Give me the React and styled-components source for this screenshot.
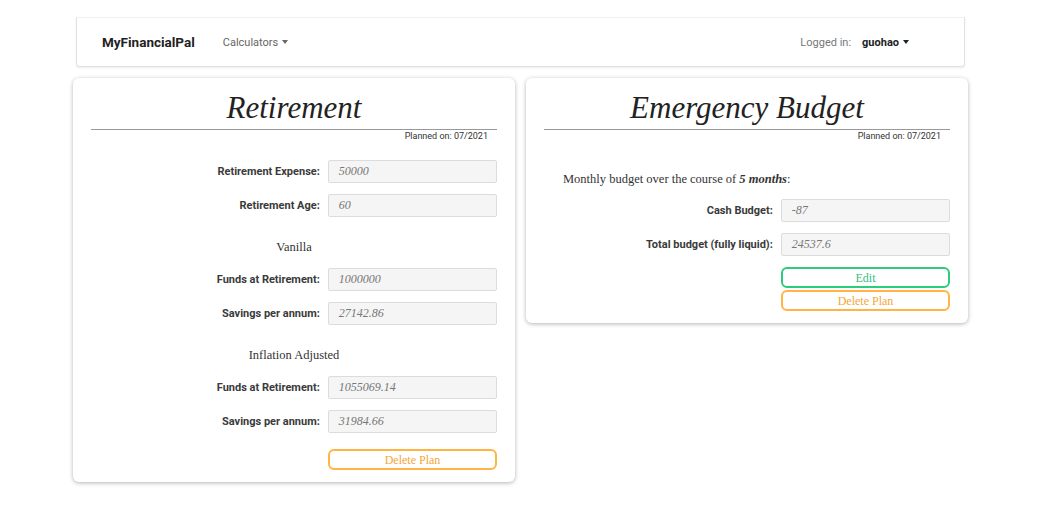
import React from 'react';
import styled, { createGlobalStyle } from 'styled-components';

const GlobalStyle = createGlobalStyle`
  body {
    margin: 0;
    background: #ffffff;
    font-family: Roboto, 'Liberation Sans', sans-serif;
  }
`;

const Page = styled.div`
  width: 1041px;
  height: 520px;
  padding-top: 17px;
  box-sizing: border-box;
`;

const NavBar = styled.nav`
  width: 889px;
  height: 50px;
  margin: 0 auto;
  box-sizing: border-box;
  border: 1px solid #e2e2e2;
  border-top-color: #f0f0f0;
  border-radius: 0 0 3px 3px;
  box-shadow: 0 1px 2px rgba(0, 0, 0, 0.08);
  display: flex;
  align-items: center;
  padding: 0 55px 0 25px;
`;

const Brand = styled.span`
  font-size: 13.5px;
  font-weight: 700;
  color: #222;
  margin-right: 28px;
`;

const NavLink = styled.span`
  font-size: 11px;
  color: ${(p) => (p.$strong ? '#222' : '#666')};
  font-weight: ${(p) => (p.$strong ? 700 : 400)};
  display: flex;
  align-items: center;
`;

const Caret = styled.span`
  display: inline-block;
  margin-left: 4px;
  border-top: 4px solid currentColor;
  border-left: 3.5px solid transparent;
  border-right: 3.5px solid transparent;
`;

const Spacer = styled.div`
  flex: 1;
`;

const LoggedLabel = styled.span`
  font-size: 11px;
  color: #777;
  margin-right: 11px;
`;

const Cards = styled.div`
  width: 895px;
  margin: 11px auto 0;
  display: flex;
  gap: 11px;
  align-items: flex-start;
`;

const Card = styled.section`
  width: 442px;
  box-sizing: border-box;
  padding: 0 18px 12px;
  border-radius: 6px;
  background: #fff;
  box-shadow: 0 1px 4px rgba(0, 0, 0, 0.3);
`;

const Title = styled.h2`
  margin: 0;
  padding-top: 8px;
  font-family: 'Liberation Serif', serif;
  font-style: italic;
  font-weight: 400;
  font-size: 31px;
  line-height: 43px;
  color: #222;
  text-align: center;
  border-bottom: 1px solid #999;
`;

const Planned = styled.div`
  font-size: 9px;
  line-height: 12px;
  color: #333;
  text-align: right;
  padding-right: 9px;
  margin-bottom: ${(p) => p.$after}px;
`;

const Row = styled.div`
  display: grid;
  grid-template-columns: 7fr 5fr;
  align-items: center;
  margin-bottom: ${(p) => p.$after ?? 11}px;
`;

const Label = styled.label`
  text-align: right;
  padding-right: 8px;
  font-size: 11px;
  font-weight: 700;
  color: #3a3a3a;
`;

const Field = styled.div`
  height: 23px;
  box-sizing: border-box;
  border: 1px solid #dcdcdc;
  border-radius: 2px;
  background: #f5f5f5;
  padding-left: 10px;
  font-family: 'Liberation Serif', serif;
  font-style: italic;
  font-size: 12px;
  line-height: 21px;
  color: #777;
`;

const Section = styled.div`
  font-family: 'Liberation Serif', serif;
  font-size: 12.5px;
  line-height: 20px;
  color: #333;
  text-align: center;
  margin: 20px 0 11px;
`;

const Note = styled.p`
  margin: 0 0 10px;
  padding-left: 19px;
  font-family: 'Liberation Serif', serif;
  font-size: 12.5px;
  line-height: 20px;
  color: #333;

  strong {
    font-style: italic;
  }
`;

const Actions = styled.div`
  display: flex;
  flex-direction: column;
  align-items: flex-end;
  gap: 2px;
  margin-top: ${(p) => p.$top}px;
`;

const Button = styled.button`
  width: 169px;
  height: 21px;
  box-sizing: border-box;
  background: #fff;
  border: 2px solid ${(p) => p.$color};
  border-radius: 6px;
  color: ${(p) => p.$text};
  font-family: 'Liberation Serif', serif;
  font-size: 12px;
  line-height: 16px;
  padding: 0;
  cursor: pointer;
`;

const orange = { $color: '#ffb444', $text: '#f5a638' };
const green = { $color: '#2bcc7c', $text: '#2fbf7a' };

function FieldRow({ label, value, after }) {
  return (
    <Row $after={after}>
      <Label>{label}</Label>
      <Field>{value}</Field>
    </Row>
  );
}

function App() {
  return (
    <Page>
      <GlobalStyle />
      <NavBar>
        <Brand>MyFinancialPal</Brand>
        <NavLink>
          Calculators
          <Caret />
        </NavLink>
        <Spacer />
        <LoggedLabel>Logged in:</LoggedLabel>
        <NavLink $strong>
          guohao
          <Caret />
        </NavLink>
      </NavBar>

      <Cards>
        <Card>
          <Title>Retirement</Title>
          <Planned $after={18}>Planned on: 07/2021</Planned>
          <FieldRow label="Retirement Expense:" value="50000" />
          <FieldRow label="Retirement Age:" value="60" after={0} />
          <Section>Vanilla</Section>
          <FieldRow label="Funds at Retirement:" value="1000000" />
          <FieldRow label="Savings per annum:" value="27142.86" after={0} />
          <Section>Inflation Adjusted</Section>
          <FieldRow label="Funds at Retirement:" value="1055069.14" />
          <FieldRow label="Savings per annum:" value="31984.66" after={0} />
          <Actions $top={16}>
            <Button {...orange}>Delete Plan</Button>
          </Actions>
        </Card>

        <Card>
          <Title>Emergency Budget</Title>
          <Planned $after={27}>Planned on: 07/2021</Planned>
          <Note>
            Monthly budget over the course of <strong>5 months</strong>:
          </Note>
          <FieldRow label="Cash Budget:" value="-87" />
          <FieldRow label="Total budget (fully liquid):" value="24537.6" after={0} />
          <Actions $top={11}>
            <Button {...green}>Edit</Button>
            <Button {...orange}>Delete Plan</Button>
          </Actions>
        </Card>
      </Cards>
    </Page>
  );
}

export default App;
